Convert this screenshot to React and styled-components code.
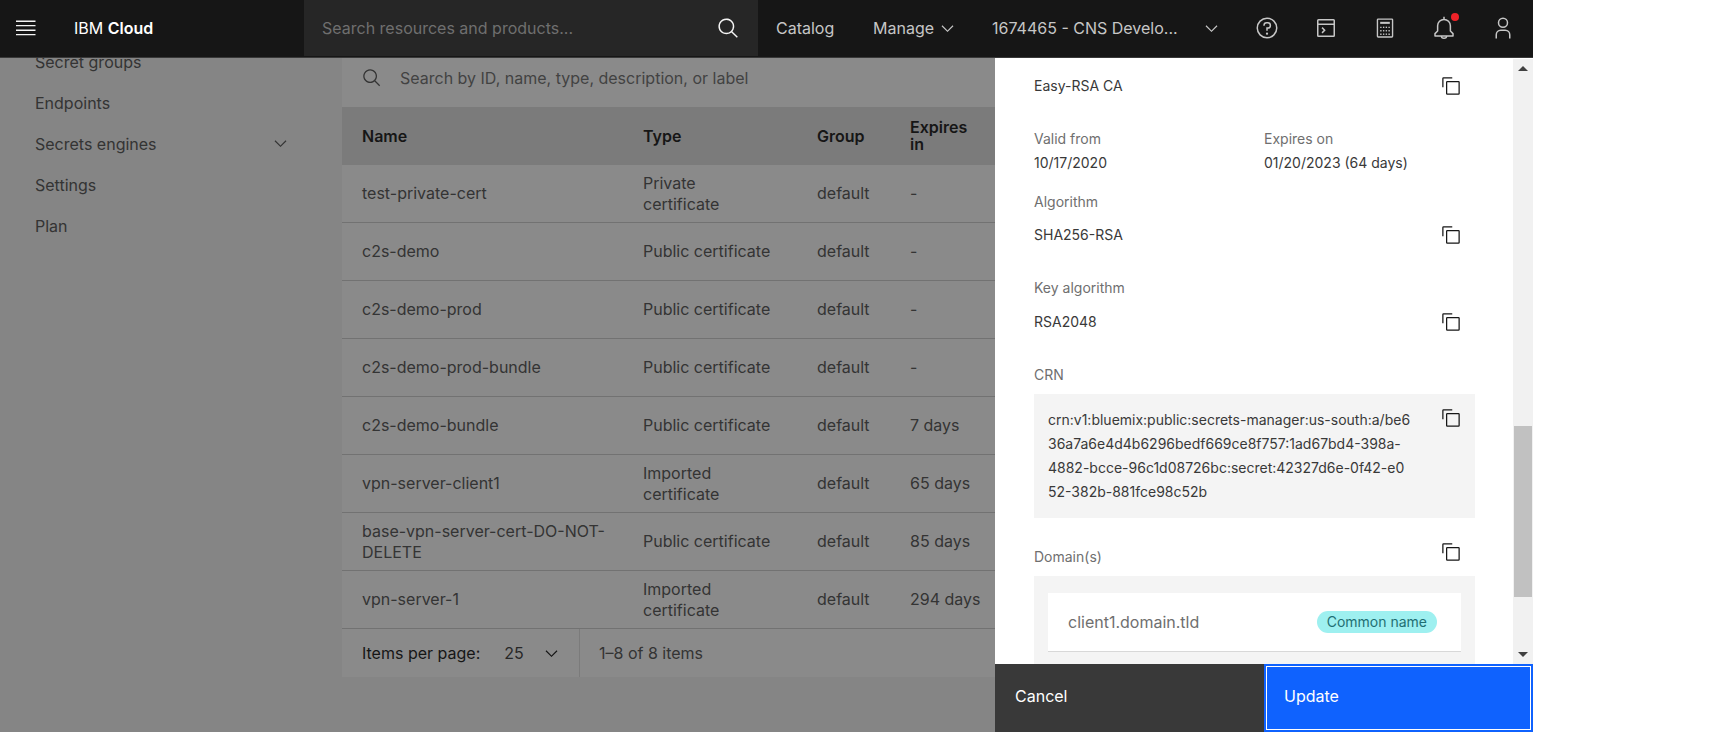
import React from "react";
import styled, { createGlobalStyle, css } from "styled-components";

const sans = `Inter, Roboto, "Liberation Sans", sans-serif`;

const GlobalStyle = createGlobalStyle`
  *, *::before, *::after { box-sizing: border-box; }
  body { margin: 0; background: #fff; font-family: ${sans}; font-size: 16px; }
  button, input, select { font: inherit; color: inherit; }
  button { cursor: pointer; }
`;

const Shell = styled.div`
  display: flex;
  flex-direction: column;
  height: 100vh;
  margin-right: 191px;
  overflow: hidden;
`;

const Header = styled.header`
  display: flex;
  flex: none;
  height: 58px;
  padding: 0 1px 1px 0;
  background: #161616;
  border-bottom: 1px solid #393939;
  color: #c6c6c6;
`;

const MenuButton = styled.button`
  display: flex;
  align-items: center;
  width: 74px;
  padding: 0 16px;
  border: 0;
  background: none;
  color: #f4f4f4;
`;

const Brand = styled.a`
  align-self: center;
  width: 230px;
  color: #fff;
  text-decoration: none;
  b { font-weight: 600; }
`;

const HeaderSearch = styled.label`
  display: flex;
  flex: 1;
  align-items: center;
  min-width: 0;
  padding: 0 18px;
  background: #262626;
  color: #f4f4f4;
`;

const PlainInput = styled.input`
  flex: 1;
  min-width: 0;
  padding: 0;
  border: 0;
  outline: 0;
  background: none;
  &::placeholder { color: #6f6f6f; opacity: 1; }
`;

const HeaderLink = styled.a`
  align-self: center;
  width: 115px;
  padding-left: 18px;
  color: inherit;
  text-decoration: none;
`;

const HeaderMenu = styled.button`
  display: flex;
  align-items: center;
  justify-content: space-between;
  width: ${(p) => p.$width};
  margin-right: ${(p) => p.$after};
  padding: 0;
  border: 0;
  background: none;
  white-space: nowrap;
`;

const HeaderAction = styled.button`
  position: relative;
  display: flex;
  align-items: center;
  justify-content: center;
  width: 59px;
  padding: 0;
  border: 0;
  background: none;
`;

const Dot = styled.span`
  position: absolute;
  top: 13px;
  right: 14px;
  width: 8px;
  height: 8px;
  border-radius: 50%;
  background: #ee2228;
`;

const Body = styled.div`
  display: flex;
  flex: 1;
  min-height: 0;
`;

const Page = styled.div`
  position: relative;
  display: flex;
  flex: 1;
  min-width: 0;
  overflow: hidden;
  background: #f4f4f4;
  color: #525252;
`;

const Overlay = styled.div`
  position: absolute;
  inset: 0;
  background: rgba(22, 22, 22, 0.5);
`;

const SideNav = styled.nav`
  flex: none;
  width: 342px;
  margin-top: -17px;
`;

const NavLink = styled.a`
  display: flex;
  align-items: center;
  justify-content: space-between;
  height: 41px;
  padding: 0 52px 0 35px;
  color: #525252;
  text-decoration: none;
`;

const Content = styled.main`
  flex: 1;
  min-width: 0;
`;

const TableSearch = styled.label`
  display: flex;
  align-items: center;
  gap: 18px;
  height: 58px;
  margin-top: -9px;
  padding: 0 20px;
  background: #fff;
`;

const Table = styled.table`
  width: 100%;
  border-collapse: separate;
  border-spacing: 0;
  table-layout: fixed;
  background: #fff;
`;

const Th = styled.th`
  width: ${(p) => p.$width};
  height: 58px;
  padding: 0 16px 0 ${(p) => (p.$first ? "20px" : "0")};
  background: #e0e0e0;
  color: #161616;
  font-weight: 600;
  line-height: 17px;
  text-align: left;
`;

const Td = styled.td`
  height: ${(p) => (p.$first ? "58px" : "auto")};
  padding: 0 ${(p) => p.$end || "0"} 0 ${(p) => (p.$first ? "20px" : "0")};
  border-bottom: 1px solid #cecece;
  line-height: 21px;
`;

const Pagination = styled.div`
  display: flex;
  height: 48px;
  background: #fff;
`;

const PageSize = styled.label`
  display: flex;
  align-items: center;
  width: 238px;
  padding: 0 18px 0 20px;
  border-right: 1px solid #e0e0e0;
  color: #161616;
`;

const SizeSelect = styled.select`
  flex: 1;
  margin-left: 24px;
  padding: 0;
  border: 0;
  appearance: none;
  background: none;
  color: #393939;
`;

const PageRange = styled.span`
  align-self: center;
  padding-left: 19px;
`;

const Panel = styled.aside`
  display: flex;
  flex: none;
  flex-direction: column;
  width: 538px;
  background: #fff;
`;

const PanelBody = styled.div`
  display: flex;
  flex: 1;
  min-height: 0;
`;

const Details = styled.div`
  flex: 1;
  min-width: 0;
  padding: 16px 38px 0 39px;
  overflow: hidden;
  color: #393939;
  font-size: 14px;
  line-height: 24px;
`;

const Field = styled.div`
  display: flex;
  align-items: center;
  justify-content: space-between;
  height: 24px;
  padding-right: 14px;
  margin-bottom: 29px;
`;

const LabelRow = styled.div`
  display: flex;
  align-items: flex-start;
  justify-content: space-between;
  padding-right: 14px;
  margin-bottom: 7px;
`;

const Columns = styled.div`
  display: grid;
  grid-template-columns: 230px 1fr;
  margin-bottom: 15px;
`;

const Label = styled.div`
  margin-bottom: ${(p) => p.$after || "0"};
  padding-top: ${(p) => p.$before || "0"};
  color: #6f6f6f;
`;

const IconButton = styled.button`
  display: flex;
  padding: 0;
  border: 0;
  background: none;
  color: #161616;
`;

const CodeBox = styled.div`
  display: flex;
  align-items: flex-start;
  justify-content: space-between;
  height: 124px;
  margin-bottom: 24px;
  padding: 14px;
  background: #f4f4f4;
`;

const Code = styled.code`
  font-family: inherit;
  white-space: pre;
`;

const DomainBox = styled.div`
  height: 120px;
  padding: 17px 14px;
  background: #f4f4f4;
`;

const Domain = styled.div`
  display: flex;
  align-items: center;
  justify-content: space-between;
  height: 59px;
  padding: 0 24px 0 20px;
  border-bottom: 1px solid #d8d8d8;
  background: #fff;
  color: #6f6f6f;
  font-size: 16px;
`;

const Tag = styled.span`
  padding: 0 10px;
  border-radius: 11px;
  background: #9ef0f0;
  color: #1f6f73;
  font-size: 14px;
  line-height: 22px;
`;

const ScrollRail = styled.div`
  display: flex;
  flex: none;
  flex-direction: column;
  width: 20px;
  margin-top: 1px;
  padding: 7px 1px;
  background: #f1f1f1;
`;

const ScrollArrow = styled.span`
  align-self: center;
  border: 5px solid transparent;
  ${(p) =>
    p.$down
      ? css`border-top-color: #404040; border-bottom: 0;`
      : css`border-bottom-color: #404040; border-top: 0;`}
`;

const ScrollTrack = styled.div`
  display: grid;
  flex: 1;
  grid-template-rows: 355fr 171fr 55fr;
`;

const ScrollThumb = styled.div`
  grid-row: 2;
  background: #c1c1c1;
`;

const PanelFooter = styled.footer`
  display: grid;
  flex: none;
  grid-template-columns: 1fr 1fr;
  height: 68px;
`;

const FooterButton = styled.button`
  padding: 0 20px 4px;
  border: 0;
  background: #393939;
  color: #fff;
  text-align: left;
  ${(p) =>
    p.$primary &&
    css`
      padding: 0 18px 4px;
      border: 2px solid #0f62fe;
      background: #0f62fe;
      box-shadow: inset 0 0 0 1px #fff;
    `}
`;

const Glyph = ({ size = 21, children }) => (
  <svg width={size} height={size} viewBox="0 0 32 32" fill="currentColor" aria-hidden="true">
    {children}
  </svg>
);

const Chevron = () => (
  <Glyph size={19}>
    <path d="M16 22 6 12l1.4-1.4 8.6 8.6 8.6-8.6L26 12z" />
  </Glyph>
);

const SearchIcon = ({ size }) => (
  <Glyph size={size}>
    <path d="M29 27.586l-7.552-7.552a11.018 11.018 0 1 0-1.414 1.414L27.586 29zM4 13a9 9 0 1 1 9 9 9.01 9.01 0 0 1-9-9z" />
  </Glyph>
);

const CopyIcon = () => (
  <Glyph size={20}>
    <path d="M28 10v18H10V10h18m0-2H10a2 2 0 0 0-2 2v18a2 2 0 0 0 2 2h18a2 2 0 0 0 2-2V10a2 2 0 0 0-2-2z" />
    <path d="M4 18H2V4a2 2 0 0 1 2-2h14v2H4z" />
  </Glyph>
);

const HelpIcon = () => (
  <Glyph size={24}>
    <path d="M16 2a14 14 0 1 0 14 14A14 14 0 0 0 16 2zm0 26a12 12 0 1 1 12-12 12 12 0 0 1-12 12z" />
    <circle cx="16" cy="23.5" r="1.5" />
    <path d="M17 8h-1.5a4.49 4.49 0 0 0-4.5 4.5v.5h2v-.5a2.5 2.5 0 0 1 2.5-2.5H17a2.5 2.5 0 0 1 0 5h-2v4.5h2V17a4.5 4.5 0 0 0 0-9z" />
  </Glyph>
);

const ShellIcon = () => (
  <Glyph size={24}>
    <path d="M26 4H6a2 2 0 0 0-2 2v20a2 2 0 0 0 2 2h20a2 2 0 0 0 2-2V6a2 2 0 0 0-2-2zm0 2v4H6V6zM6 26V12h20v14z" />
    <path d="M10 16.2l2.8 2.8-2.8 2.8 1.4 1.4 4.2-4.2-4.2-4.2z" />
  </Glyph>
);

const CalculatorIcon = () => (
  <Glyph size={22}>
    <path d="M26 4v24H6V4h20m0-2H6a2 2 0 0 0-2 2v24a2 2 0 0 0 2 2h20a2 2 0 0 0 2-2V4a2 2 0 0 0-2-2z" />
    <path d="M9 7h14v3H9z" />
    {[14, 19, 24].map((y) => [9, 13, 17, 21].map((x) => (
      <path key={`${x}-${y}`} d={`M${x} ${y}h2v2h-2z`} />
    )))}
  </Glyph>
);

const BellIcon = () => (
  <Glyph size={24}>
    <g fill="none" stroke="currentColor" strokeWidth="2" strokeLinejoin="round">
      <path d="M16 1v3M4 26.5v-3L7.500 20V13a8.500 8.500 0 0 1 17 0v7l3.500 3.500v3z" />
      <path d="M12.5 26.5a3.500 3 0 0 0 7 0" />
    </g>
  </Glyph>
);

const UserIcon = () => (
  <Glyph size={24}>
    <path d="M16 4a5 5 0 1 1-5 5 5 5 0 0 1 5-5m0-2a7 7 0 1 0 7 7 7 7 0 0 0-7-7z" />
    <path d="M26 30h-2v-5a5 5 0 0 0-5-5h-6a5 5 0 0 0-5 5v5H6v-5a7 7 0 0 1 7-7h6a7 7 0 0 1 7 7z" />
  </Glyph>
);

const BurgerIcon = () => (
  <svg width="20" height="16" viewBox="0 0 20 16" stroke="currentColor" strokeWidth="1.4" aria-hidden="true">
    <path d="M0 1.3h19.500M0 5.600h19.500M0 10.200h19.500M0 14.600h19.500" />
  </svg>
);

const CopyButton = ({ what }) => (
  <IconButton type="button" aria-label={`Copy ${what}`}>
    <CopyIcon />
  </IconButton>
);

const navItems = ["Secret groups", "Endpoints", "Secrets engines", "Settings", "Plan"];

const secrets = [
  ["test-private-cert", "Private certificate", "default", "-"],
  ["c2s-demo", "Public certificate", "default", "-"],
  ["c2s-demo-prod", "Public certificate", "default", "-"],
  ["c2s-demo-prod-bundle", "Public certificate", "default", "-"],
  ["c2s-demo-bundle", "Public certificate", "default", "7 days"],
  ["vpn-server-client1", "Imported certificate", "default", "65 days"],
  ["base-vpn-server-cert-DO-NOT-DELETE", "Public certificate", "default", "85 days"],
  ["vpn-server-1", "Imported certificate", "default", "294 days"],
];

const crn = [
  "crn:v1:bluemix:public:secrets-manager:us-south:a/be6",
  "36a7a6e4d4b6296bedf669ce8f757:1ad67bd4-398a-",
  "4882-bcce-96c1d08726bc:secret:42327d6e-0f42-e0",
  "52-382b-881fce98c52b",
];

export default function App() {
  return (
    <Shell>
      <GlobalStyle />
      <Header>
        <MenuButton type="button" aria-label="Open menu"><BurgerIcon /></MenuButton>
        <Brand href="#">IBM <b>Cloud</b></Brand>
        <HeaderSearch>
          <PlainInput aria-label="Search resources" placeholder="Search resources and products..." />
          <SearchIcon size={23} />
        </HeaderSearch>
        <HeaderLink href="#">Catalog</HeaderLink>
        <HeaderMenu type="button" $width="84px" $after="35px">Manage <Chevron /></HeaderMenu>
        <HeaderMenu type="button" $width="229px" $after="16px">1674465 - CNS Develo... <Chevron /></HeaderMenu>
        <HeaderAction type="button" aria-label="Help"><HelpIcon /></HeaderAction>
        <HeaderAction type="button" aria-label="Shell"><ShellIcon /></HeaderAction>
        <HeaderAction type="button" aria-label="Cost estimator"><CalculatorIcon /></HeaderAction>
        <HeaderAction type="button" aria-label="Notifications"><BellIcon /><Dot /></HeaderAction>
        <HeaderAction type="button" aria-label="Account"><UserIcon /></HeaderAction>
      </Header>
      <Body>
        <Page>
          <SideNav>
            {navItems.map((item) => (
              <NavLink href="#" key={item}>
                {item}
                {item === "Secrets engines" && <Chevron />}
              </NavLink>
            ))}
          </SideNav>
          <Content>
            <TableSearch>
              <SearchIcon size={20} />
              <PlainInput aria-label="Search secrets" placeholder="Search by ID, name, type, description, or label" />
            </TableSearch>
            <Table>
              <thead>
                <tr>
                  <Th $first>Name</Th>
                  <Th $width="174px">Type</Th>
                  <Th $width="93px">Group</Th>
                  <Th $width="85px">Expires in</Th>
                </tr>
              </thead>
              <tbody>
                {secrets.map(([name, type, group, expires]) => (
                  <tr key={name}>
                    <Td $first $end="16px">{name}</Td>
                    <Td $end="42px">{type}</Td>
                    <Td>{group}</Td>
                    <Td>{expires}</Td>
                  </tr>
                ))}
              </tbody>
            </Table>
            <Pagination>
              <PageSize>
                Items per page:
                <SizeSelect defaultValue="25"><option>25</option></SizeSelect>
                <Chevron />
              </PageSize>
              <PageRange>1–8 of 8 items</PageRange>
            </Pagination>
          </Content>
          <Overlay />
        </Page>
        <Panel>
          <PanelBody>
            <Details>
              <Field>Easy-RSA CA <CopyButton what="issuer" /></Field>
              <Columns>
                <div><Label>Valid from</Label>10/17/2020</div>
                <div><Label>Expires on</Label>01/20/2023 (64 days)</div>
              </Columns>
              <Label $after="9px">Algorithm</Label>
              <Field>SHA256-RSA <CopyButton what="algorithm" /></Field>
              <Label $after="10px">Key algorithm</Label>
              <Field>RSA2048 <CopyButton what="key algorithm" /></Field>
              <Label $after="7px">CRN</Label>
              <CodeBox>
                <Code>
                  {crn.map((line) => (
                    <React.Fragment key={line}>{line}<br /></React.Fragment>
                  ))}
                </Code>
                <CopyButton what="CRN" />
              </CodeBox>
              <LabelRow>
                <Label $before="3px">Domain(s)</Label>
                <CopyButton what="domains" />
              </LabelRow>
              <DomainBox>
                <Domain>client1.domain.tld <Tag>Common name</Tag></Domain>
              </DomainBox>
            </Details>
            <ScrollRail>
              <ScrollArrow />
              <ScrollTrack><ScrollThumb /></ScrollTrack>
              <ScrollArrow $down />
            </ScrollRail>
          </PanelBody>
          <PanelFooter>
            <FooterButton type="button">Cancel</FooterButton>
            <FooterButton type="button" $primary>Update</FooterButton>
          </PanelFooter>
        </Panel>
      </Body>
    </Shell>
  );
}
